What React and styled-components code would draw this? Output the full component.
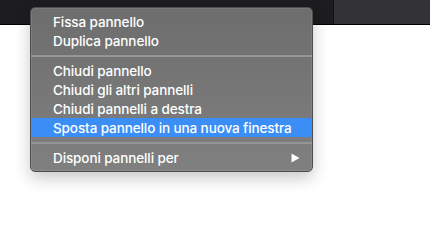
import React from 'react';
import styled, { createGlobalStyle } from 'styled-components';

const GlobalStyle = createGlobalStyle`
    html, body{
        margin: 0;
        padding: 0;
        background: #ffffff;
    }
    body{
        font-family: Inter, "Liberation Sans", sans-serif;
    }
`

const Window = styled.div`
    position: relative;
    width: 430px;
    height: 225px;
    overflow: hidden;
    background: #ffffff;
`

const TitleBar = styled.div`
    display: flex;
    height: 24px;
    border-bottom: 1px solid #000000;
`

const TabArea = styled.div`
    flex: 1;
    background: #1d1d1f;
`

const TabSide = styled.div`
    width: 96px;
    background: #333335;
    border-left: 1px solid #141414;
`

const Menu = styled.ul`
    position: absolute;
    top: 7px;
    left: 30px;
    width: 281px;
    margin: 0;
    padding: 4px 0;
    list-style: none;
    background: linear-gradient(#6d6d6d, #808080);
    border: 1px solid #4e4e4e;
    border-radius: 5px;
    box-shadow: inset 0 0 0 1px rgba(255, 255, 255, 0.08), 0 6px 16px rgba(0, 0, 0, 0.22);
`

const Item = styled.li`
    display: flex;
    align-items: center;
    justify-content: space-between;
    height: 19px;
    padding: 0 12px 0 22px;
    font-size: 13.5px;
    font-weight: 500;
    color: #ffffff;
    letter-spacing: -0.1px;
    background: ${props => props.active ? '#3b8ef6' : 'transparent'};
`

const Separator = styled.li`
    display: flex;
    align-items: center;
    height: 11px;
    &::after{
        content: "";
        flex: 1;
        height: 2px;
        background: #959595;
    }
`

const Arrow = () => (
    <svg width="9" height="10" viewBox="0 0 9 10">
        <path d="M0.5 0.5 L8.5 5 L0.5 9.5 Z" fill="#ffffff" />
    </svg>
)

const groups = [
    ['Fissa pannello', 'Duplica pannello'],
    ['Chiudi pannello', 'Chiudi gli altri pannelli', 'Chiudi pannelli a destra', 'Sposta pannello in una nuova finestra'],
]

const App = () => {

    return(
        <>
            <GlobalStyle/>
            <Window>
                <TitleBar>
                    <TabArea/>
                    <TabSide/>
                </TitleBar>
                <Menu>
                    {groups.map((group, i) => (
                        <React.Fragment key={i}>
                            {group.map(label => (
                                <Item key={label} active={label.startsWith('Sposta')}>{label}</Item>
                            ))}
                            <Separator/>
                        </React.Fragment>
                    ))}
                    <Item>
                        Disponi pannelli per
                        <Arrow/>
                    </Item>
                </Menu>
            </Window>
        </>
    )
}

export default App;
